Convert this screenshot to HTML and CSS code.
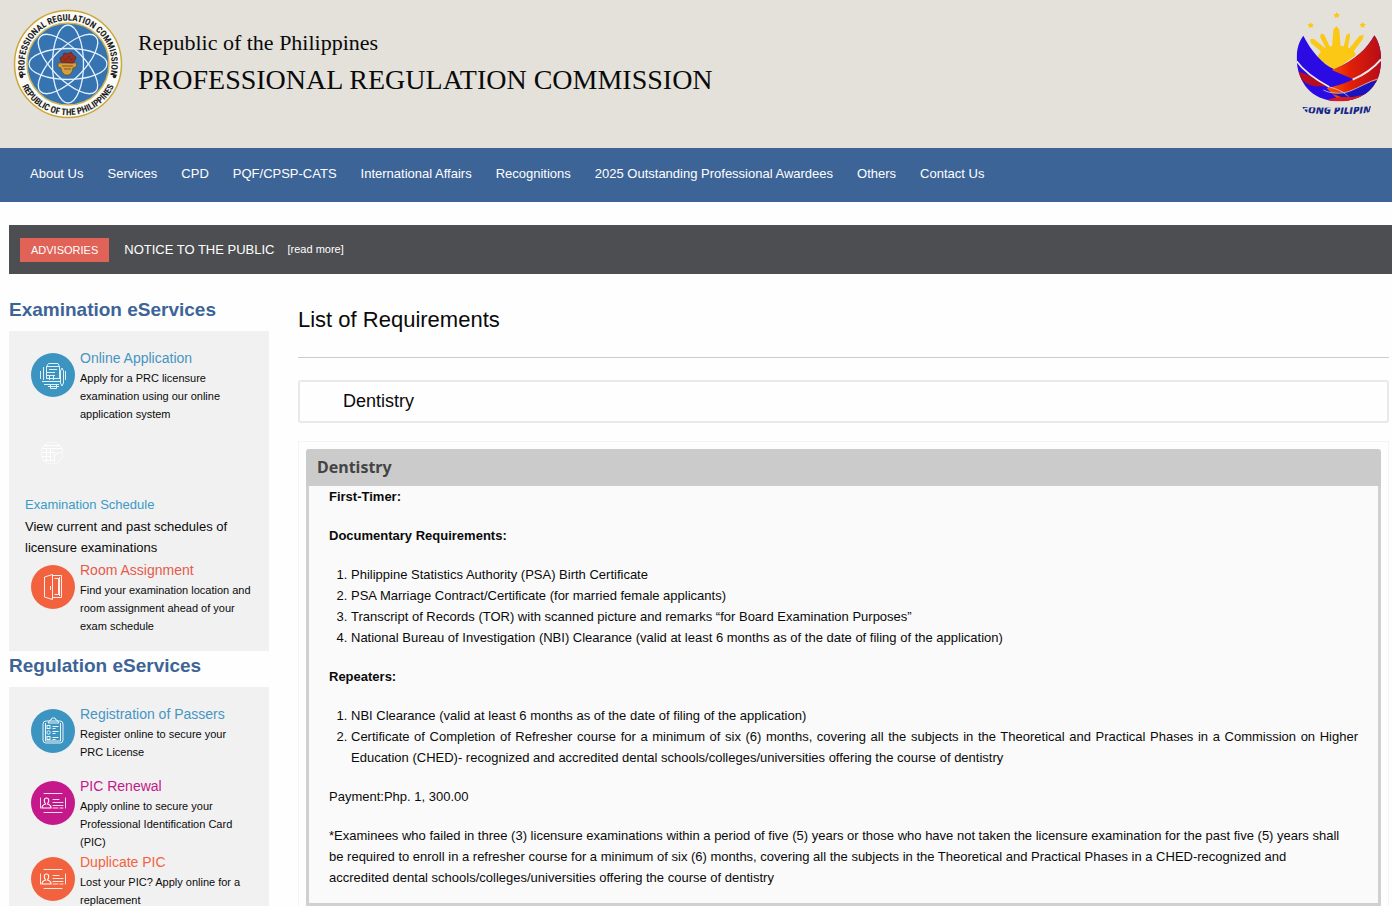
FILE: index.html
```html
<!DOCTYPE html>
<html lang="en">
<head>
<meta charset="utf-8">
<title>Professional Regulation Commission - List of Requirements</title>
<link rel="stylesheet" href="styles.css">
</head>
<body>
<svg class="sprite" aria-hidden="true">
  <symbol id="icon-card" viewBox="0 0 44 44">
    <g fill="none" stroke="#fff" stroke-linecap="round">
      <path d="M13 12.500h18M13 31.500h18M9.500 17v10M34.500 17v10" opacity=".85"/>
      <path d="M11 27c0-2.500 1.500-3.500 3.500-4-2-3-1.500-6 1-6s3 3 1 6c2 .5 3.500 1.500 3.500 4z" stroke-width="1.200"/>
      <path d="M22 18.500h6M22 21.500h10M22 24.500h10M22 27h5M29 27h3" opacity=".85"/>
    </g>
  </symbol>
</svg>

<header class="masthead">
  <svg class="seal" viewBox="0 0 110 110" role="img" aria-label="Seal of the Professional Regulation Commission">
    <defs>
      <path id="arc-top" d="M17.300 76.800A43.500 43.500 0 1 1 92.700 76.800"/>
      <path id="arc-bottom" d="M5.700 68.200A51 51 0 0 0 104.300 68.200"/>
    </defs>
    <circle cx="55" cy="55" r="53.500" fill="#fbfaf6" stroke="#c9a93c" stroke-width="1.500"/>
    <circle cx="55" cy="55" r="41" fill="#3573b1" stroke="#d0b657" stroke-width="1.500"/>
    <g fill="none" stroke="#e4f1ff" stroke-width="1.300">
      <ellipse cx="55" cy="55" rx="39" ry="15.500"/>
      <ellipse cx="55" cy="55" rx="39" ry="15.500" transform="rotate(90 55 55)"/>
      <ellipse cx="55" cy="55" rx="39" ry="15.500" transform="rotate(45 55 55)"/>
      <ellipse cx="55" cy="55" rx="39" ry="15.500" transform="rotate(-45 55 55)"/>
    </g>
    <path d="M45 54h19l-1 4-3 1-1 4-3 3h-4l-3-3-1-4-3-1z" fill="#d5a038" stroke="#6d4b22" stroke-width=".7"/>
    <path d="M48 53l-1-4 3-2 1-3 4 1 3-2 2 3 3 2-1 3-2 3z" fill="#9b2f22" stroke="#5e2320" stroke-width=".7"/>
    <path d="M50 49l3 2 3-4 2 4 2-2M49 57h11M51 60h7" fill="none" stroke="#6a2820" stroke-width=".7"/>
    <circle cx="8.500" cy="67.500" r="1.800" fill="#222"/>
    <circle cx="101.500" cy="67.500" r="1.800" fill="#222"/>
    <text class="seal-text"><textPath href="#arc-top" startOffset="50%">PROFESSIONAL REGULATION COMMISSION</textPath></text>
    <text class="seal-text"><textPath href="#arc-bottom" startOffset="50%">REPUBLIC OF THE PHILIPPINES</textPath></text>
  </svg>
  <div class="titles">
    <p class="country">Republic of the Philippines</p>
    <p class="agency">PROFESSIONAL REGULATION COMMISSION</p>
  </div>
  <svg class="bagong" viewBox="45 30 264 318" role="img" aria-label="Bagong Pilipinas">
    <defs>
      <linearGradient id="red" x1="0" x2="1"><stop offset="0" stop-color="#ff5a00"/><stop offset=".4" stop-color="#e22108"/><stop offset="1" stop-color="#b40b19"/></linearGradient>
      <clipPath id="bowl"><path d="M70 107C48 135 44 185 59 225C76 275 120 304 177 304C235 304 281 275 297 225C308 185 305 137 283 106C262 145 225 182 163 208C125 190 95 155 70 107z"/></clipPath>
      <clipPath id="caption"><path d="M66 321C120 324 220 324 273 318L268 336C250 346 95 346 78 336z"/></clipPath>
    </defs>
    <g fill="#fbc816">
      <path d="M170 36l3 6 7 1-5 5 1 7-6-4-6 4 1-7-5-5 7-1zM92 67l3 5 7 1-5 5 1 6-6-3-6 3 1-6-5-5 7-1zM248 66l3 5 7 1-5 5 1 6-6-3-6 3 1-6-5-5 7-1z"/>
      <path d="M112 172C122 145 145 137 172 137S222 145 228 165L163 212z"/>
      <path d="M156 142l4-53 9-11 9 11 4 53zM139 148l-19-38 3-9 9 2 18 38zM191 140l8-35 10-6 1 10-7 39zM124 155L92 128l-1-11 11 0 36 29zM207 146l31-38 13-4-2 12-29 39z"/>
    </g>
    <g clip-path="url(#bowl)">
      <path d="M40 90h274v220H40z" fill="#2a0be4"/>
      <path d="M290 95C262 145 225 182 155 210L220 238C190 252 165 260 140 264L185 310H310V90z" fill="url(#red)"/>
      <path d="M50 214C80 220 112 238 145 259L105 259C87 256 75 248 60 236z" fill="#b80d20"/>
      <path d="M218 270C250 255 270 245 298 240L285 272C255 285 220 292 190 293C175 288 165 284 150 280C180 280 200 278 218 270z" fill="#1814bf"/>
      <path d="M303 178C280 205 250 225 218 239" fill="none" stroke="#eeeaf2" stroke-width="6"/>
      <path d="M50 184C70 212 105 238 148 261" fill="none" stroke="#eeeaf2" stroke-width="5"/>
      <path d="M148 261C175 268 195 278 205 290M296 236C265 244 240 262 208 274C180 284 150 280 130 270" fill="none" stroke="#eeeaf2" stroke-width="2"/>
      <path d="M135 304C155 290 200 290 235 292L200 310z" fill="#d51921"/>
    </g>
    <text class="bagong-text" x="168" y="343" clip-path="url(#caption)">GONG PILIPIN</text>
  </svg>
</header>

<nav class="menu" aria-label="Main">
  <a href="#">About Us</a>
  <a href="#">Services</a>
  <a href="#">CPD</a>
  <a href="#">PQF/CPSP-CATS</a>
  <a href="#">International Affairs</a>
  <a href="#">Recognitions</a>
  <a href="#">2025 Outstanding Professional Awardees</a>
  <a href="#">Others</a>
  <a href="#">Contact Us</a>
</nav>

<section class="ticker">
  <span class="tag">ADVISORIES</span>
  <span class="notice">NOTICE TO THE PUBLIC</span>
  <a class="more" href="#">[read more]</a>
</section>

<div class="columns">
  <aside class="sidebar">
    <h2>Examination eServices</h2>
    <div class="services">
      <div class="service">
        <svg class="badge blue" viewBox="0 0 44 44" aria-hidden="true">
          <g fill="none" stroke="#fff" opacity=".85">
            <path d="M15.500 26V13.500l2-3H27l1.500 3V26M15.500 13.500h13M18 16.500h8M16 19.500h8M16 22.500h8M16 25.500h12M12.500 27V14M9.500 18v8M11 28.500h18M18.500 27v-4M22.500 27v-4"/>
            <path d="M29.500 30V18l1.500-3 1.500 3v12l-1.500 3zM34.500 18v9M13 31.500h15M19.500 32v3.500h6V32M17 33.500h11"/>
          </g>
        </svg>
        <div>
          <h3><a class="t-blue" href="#">Online Application</a></h3>
          <p>Apply for a PRC licensure examination using our online application system</p>
        </div>
      </div>
      <div class="schedule">
        <svg class="ghost" viewBox="0 0 26 26" aria-hidden="true">
          <g fill="none" stroke="#fff"><circle cx="13" cy="13" r="11" opacity=".6"/><path d="M3 8.500h20M3 12.500h13M3 16.500h10M4 20.500h10M7.500 8v13M11.500 8v13M15 15l8-3M15.500 15v7M5 5.500h16"/></g>
        </svg>
        <h3><a class="t-cyan" href="#">Examination Schedule</a></h3>
        <p>View current and past schedules of licensure examinations</p>
      </div>
      <div class="service">
        <svg class="badge orange" viewBox="0 0 44 44" aria-hidden="true">
          <g fill="none" stroke="#fff" opacity=".9"><path d="M13.500 12l8-2.500v25l-8-2.500zM21.500 10.500h9v22h-9M23.500 13.500h4v16h-4M19.500 21v4M28.500 12v19"/></g>
        </svg>
        <div>
          <h3><a class="t-red" href="#">Room Assignment</a></h3>
          <p>Find your examination location and room assignment ahead of your exam schedule</p>
        </div>
      </div>
    </div>

    <h2>Regulation eServices</h2>
    <div class="services">
      <div class="service passers">
        <svg class="badge blue" viewBox="0 0 44 44" aria-hidden="true">
          <g fill="none" stroke="#fff" opacity=".9">
            <rect x="12" y="12" width="20" height="22" rx="3"/><path d="M14.500 14v18h15V14M17 14l2-3h1l1-2h3l1 2h1l2 3z"/>
            <rect x="16" y="16.500" width="3" height="3"/><circle cx="17.500" cy="23.500" r="1.700"/><rect x="16" y="27.500" width="3" height="3"/>
            <path d="M21.500 17.500h6M21.500 19.500h3M21.500 22.500h6M21.500 24.500h3M21.500 28.500h6M21.500 30.500h3"/>
          </g>
        </svg>
        <div>
          <h3><a class="t-blue" href="#">Registration of Passers</a></h3>
          <p>Register online to secure your PRC License</p>
        </div>
      </div>
      <div class="service">
        <svg class="badge magenta" viewBox="0 0 44 44" aria-hidden="true"><use href="#icon-card"/></svg>
        <div>
          <h3><a class="t-magenta" href="#">PIC Renewal</a></h3>
          <p>Apply online to secure your Professional Identification Card (PIC)</p>
        </div>
      </div>
      <div class="service">
        <svg class="badge orange" viewBox="0 0 44 44" aria-hidden="true"><use href="#icon-card"/></svg>
        <div>
          <h3><a class="t-orange" href="#">Duplicate PIC</a></h3>
          <p>Lost your PIC? Apply online for a replacement</p>
        </div>
      </div>
    </div>
  </aside>

  <main class="content">
    <h1>List of Requirements</h1>
    <button class="accordion" type="button">Dentistry</button>
    <section class="panel">
      <h2>Dentistry</h2>
      <div class="requirements">
        <p><strong>First-Timer:</strong></p>
        <p><strong>Documentary Requirements:</strong></p>
        <ol>
          <li>Philippine Statistics Authority (PSA) Birth Certificate</li>
          <li>PSA Marriage Contract/Certificate (for married female applicants)</li>
          <li>Transcript of Records (TOR) with scanned picture and remarks “for Board Examination Purposes”</li>
          <li>National Bureau of Investigation (NBI) Clearance (valid at least 6 months as of the date of filing of the application)</li>
        </ol>
        <p><strong>Repeaters:</strong></p>
        <ol>
          <li>NBI Clearance (valid at least 6 months as of the date of filing of the application)</li>
          <li>Certificate of Completion of Refresher course for a minimum of six (6) months, covering all the subjects in the Theoretical and Practical Phases in a Commission on Higher Education (CHED)- recognized and accredited dental schools/colleges/universities offering the course of dentistry</li>
        </ol>
        <p>Payment:Php. 1, 300.00</p>
        <p class="note">*Examinees who failed in three (3) licensure examinations within a period of five (5) years or those who have not taken the licensure examination for the past five (5) years shall be required to enroll in a refresher course for a minimum of six (6) months, covering all the subjects in the Theoretical and Practical Phases in a CHED-recognized and accredited dental schools/colleges/universities offering the course of dentistry</p>
      </div>
    </section>
  </main>
</div>
</body>
</html>
```
FILE: styles.css
```css
* { box-sizing: border-box; }

body {
  margin: 0;
  background: #fefefe;
  color: #0a0a0a;
  font: 13px/21px "Liberation Sans", Arial, sans-serif;
}

h1, h2, h3, p { margin: 0; }
a { color: inherit; text-decoration: none; }
.sprite { display: none; }

.masthead {
  display: flex;
  align-items: flex-start;
  padding: 9px 9px 29px 13px;
  background: #e4e1da;
}
.seal { width: 110px; height: 110px; }
.seal-text {
  font: bold 9px "Roboto Condensed", Roboto, sans-serif;
  text-anchor: middle;
  fill: #1d1d1d;
}
.titles {
  flex: 1;
  padding: 18px 0 0 15px;
  font-family: "Liberation Serif", "Times New Roman", serif;
}
.country { font-size: 22px; line-height: 32px; }
.agency { font-size: 28px; line-height: 42px; }
.bagong { width: 88px; height: 106px; margin-top: 1px; }
.bagong-text {
  font: italic 800 31px "Open Sans", sans-serif;
  text-anchor: middle;
  fill: #15278a;
}

.menu {
  display: flex;
  align-items: center;
  gap: 24px;
  height: 54px;
  padding: 0 30px 4px;
  background: #3d6497;
  color: #fff;
  white-space: nowrap;
}

.ticker {
  display: flex;
  align-items: center;
  height: 49px;
  margin: 23px 0 0 9px;
  padding-left: 11px;
  background: #4d4e51;
  color: #fff;
}
.tag {
  padding: 2px 11px;
  background: #e16256;
  font-size: 11px;
  line-height: 20px;
}
.notice { margin: 0 13px 0 15px; }
.more { font-size: 11px; }

.columns {
  display: grid;
  grid-template-columns: 260px minmax(0, 1fr);
  gap: 29px;
  padding: 21px 3px 0 9px;
}

.sidebar h2 {
  color: #3d6497;
  font-size: 19px;
  line-height: 30px;
}
.services {
  margin-top: 6px;
  padding: 16px;
  background: #f1f1f1;
}
.service {
  display: flex;
  gap: 5px;
  padding-left: 6px;
}
.service > div { flex: 1; }
.badge {
  width: 44px;
  height: 44px;
  margin-top: 6px;
  border-radius: 50%;
}
.blue { background: #3c94c1; }
.orange { background: #f3623e; }
.magenta { background: #c4188b; }
.services h3 { font-size: 14px; line-height: 22px; font-weight: normal; }
.service p { font-size: 11px; line-height: 18px; }
.schedule { margin: 17px 0 1px; }
.ghost { display: block; width: 26px; height: 26px; margin: 0 0 28px 14px; }
.services .schedule h3 { font-size: 13px; }
.passers { margin-bottom: 14px; }
.passers p { padding-right: 16px; }
.t-blue { color: #4795c1; }
.t-cyan { color: #3a9bc6; }
.t-red { color: #e45b4b; }
.t-magenta { color: #c4188b; }
.t-orange { color: #f3623e; }

h1 {
  padding: 10px 0 22px;
  border-bottom: 1px solid #ccc;
  font-size: 22px;
  line-height: 30px;
  font-weight: normal;
}
.accordion {
  display: block;
  width: 100%;
  margin: 22px 0 18px;
  padding: 5px 43px 6px;
  border: 2px solid #e9e9e9;
  border-radius: 3px;
  background: #fefefe;
  color: inherit;
  font: 18px/28px "Liberation Sans", Arial, sans-serif;
  text-align: left;
}
.panel {
  padding: 7px 7px 0;
  border: 1px solid #f4f4f4;
  border-bottom: 0;
}
.panel h2 {
  padding: 0 11px;
  border-radius: 3px 3px 0 0;
  background: #cbcbcb;
  color: #444;
  font: bold 16px/37px "Noto Sans", sans-serif;
}
.requirements {
  padding: 0 20px 15px;
  border: 3px solid #d0d0d0;
  border-top: 0;
  background: #fafafa;
}
.requirements p, .requirements ol { margin: 0 0 18px; }
.requirements ol { padding-left: 22px; text-align: justify; }
.requirements .note { margin: 0; padding-right: 12px; }
```
